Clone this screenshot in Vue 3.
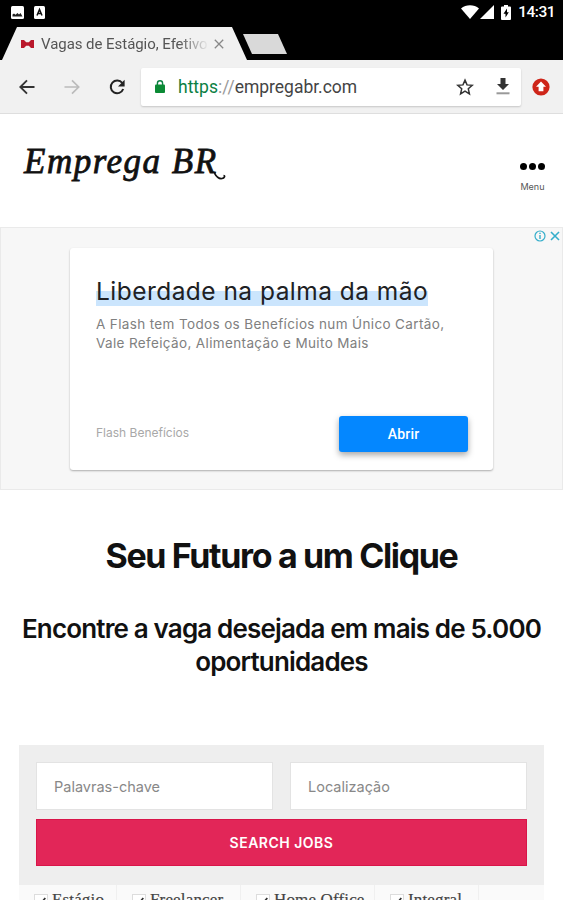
<template>
  <div class="screen">
    <div class="status-bar">
      <div class="status-group">
        <svg width="13" height="13" viewBox="0 0 13 13">
          <rect width="13" height="13" rx="1.5" fill="#fff" />
          <path d="M1.500 10.500v-2l1.500-1 1.500 1.300L6.500 7l1.500 1.500L9.500 7l2 3.500z" fill="#222" />
        </svg>
        <svg width="11" height="13" viewBox="0 0 11 13">
          <rect width="11" height="13" rx="1.5" fill="#fff" />
          <path d="M3 9.500L5.500 3.500 8 9.500M3.900 7.600h3.200" fill="none" stroke="#111" stroke-width="1.500" />
        </svg>
      </div>
      <div class="status-group right">
        <svg width="18" height="14" viewBox="0 0 18 14">
          <path d="M0 3.400C5-.9 13-.9 18 3.400L9 14z" fill="#fff" />
        </svg>
        <svg class="signal" width="14" height="14" viewBox="0 0 14 14">
          <path d="M14 0v14H0z" fill="#fff" />
        </svg>
        <svg class="battery" width="10" height="15" viewBox="0 0 10 15">
          <path d="M3 0h4v1.500h2a1 1 0 0 1 1 1V14a1 1 0 0 1-1 1H1a1 1 0 0 1-1-1V2.500a1 1 0 0 1 1-1h2z" fill="#fff" />
          <path d="M6 3.500L2.500 8.800h2V12.500L7.800 7.200H6z" fill="#000" />
        </svg>
        <span class="clock">14:31</span>
      </div>
    </div>

    <div class="tab-strip">
      <div class="tab">
        <svg width="13" height="8" viewBox="0 0 13 8">
          <path d="M0 0h3l2.200 2.300h2.600L10 0h3v8h-3L7.800 5.700H5.200L3 8H0z" fill="#b9182b" />
        </svg>
        <span class="tab-title">Vagas de Estágio, Efetivo</span>
        <svg class="tab-close" width="10" height="10" viewBox="0 0 10 10">
          <path d="M.8.8l8.400 8.400M9.200.8L.8 9.200" stroke="#888" stroke-width="1.300" />
        </svg>
      </div>
      <div class="new-tab"></div>
    </div>

    <div class="toolbar">
      <svg class="nav-icon" width="16" height="16" viewBox="0 0 16 16">
        <path d="M15.500 8H1.800M8 1.300L1.300 8 8 14.700" fill="none" stroke="#333" stroke-width="1.900" />
      </svg>
      <svg class="nav-icon" width="16" height="16" viewBox="0 0 16 16">
        <path d="M.5 8h13.700M8 1.300L14.700 8 8 14.700" fill="none" stroke="#bbb" stroke-width="1.700" />
      </svg>
      <svg class="nav-icon" width="16" height="16" viewBox="0 0 16 16">
        <path d="M13.300 4A6.400 6.400 0 1 0 14.200 10" fill="none" stroke="#222" stroke-width="2" />
        <path d="M15.600.8v6.700H9z" fill="#222" />
      </svg>
      <div class="omnibox">
        <svg width="10" height="13" viewBox="0 0 10 13">
          <path d="M2.400 6V3.400a2.600 2.600 0 0 1 5.200 0V6" fill="none" stroke="#0b8043" stroke-width="1.400" />
          <rect y="4.500" width="10" height="8.500" rx="1" fill="#0b8a35" />
        </svg>
        <span class="url"><span class="scheme">https</span><span class="slashes">://</span>empregabr.com</span>
        <svg class="star" width="18" height="18" viewBox="0 0 24 24">
          <path d="M12 2.800l2.700 6.400 6.900.6-5.200 4.600 1.500 6.800L12 17.600l-5.900 3.600 1.500-6.800-5.200-4.600 6.900-.6z" fill="none" stroke="#333" stroke-width="2" />
        </svg>
        <svg width="14" height="17" viewBox="0 0 14 17">
          <path d="M4.500 0h5v6H13L7 12 1 6h3.500z" fill="#333" />
          <path d="M.5 15.300h13" stroke="#999" stroke-width="2" />
        </svg>
      </div>
      <svg width="18" height="18" viewBox="0 0 18 18">
        <circle cx="9" cy="9" r="8.600" fill="#ce2519" />
        <path d="M9 3.600l5 5.200h-2.600v4.500H6.600V8.800H4z" fill="#fff" />
      </svg>
    </div>

    <header class="site-header">
      <div class="logo">Emprega BR<svg class="swash" width="12" height="8" viewBox="0 0 12 8">
          <path d="M0 0C2 4.500 5 7 8 6.500 10.500 6 11.500 3.500 9.500 3.500" fill="none" stroke="#111" stroke-width="1.700" />
        </svg></div>
      <div class="menu">
        <div class="dots"><i></i><i></i><i></i></div>
        <span>Menu</span>
      </div>
    </header>

    <section class="ad">
      <div class="ad-choices">
        <svg width="12" height="12" viewBox="0 0 12 12">
          <circle cx="6" cy="6" r="5" fill="none" stroke="#35aecb" stroke-width="1.200" />
          <path d="M6 5v4M6 2.700v1.300" stroke="#35aecb" stroke-width="1.400" />
        </svg>
        <svg width="10" height="10" viewBox="0 0 10 10">
          <path d="M1 1l8 8M9 1L1 9" stroke="#35aecb" stroke-width="1.600" />
        </svg>
      </div>
      <div class="ad-card">
        <h3><span>Liberdade na palma da mão</span></h3>
        <p class="line-one">A Flash tem Todos os Benefícios num Único Cartão,</p>
        <p>Vale Refeição, Alimentação e Muito Mais</p>
        <div class="ad-footer">
          <span class="advertiser">Flash Benefícios</span>
          <button class="ad-button">Abrir</button>
        </div>
      </div>
    </section>

    <section class="hero">
      <h1>Seu Futuro a um Clique</h1>
      <h2>Encontre a vaga desejada em mais de 5.000<br />oportunidades</h2>
    </section>

    <form class="search" @submit.prevent>
      <div class="fields">
        <input v-model="keywords" type="text" placeholder="Palavras-chave" />
        <input v-model="location" type="text" placeholder="Localização" />
        <button type="submit">SEARCH JOBS</button>
      </div>
      <div class="job-types">
        <label v-for="type in jobTypes" :key="type.name" :style="{ width: type.width + 'px' }">
          <span class="checkbox">
            <svg width="9" height="9" viewBox="0 0 9 9">
              <path d="M1 4.500L3.300 7 8.300 1" fill="none" stroke="#333" stroke-width="1.700" />
            </svg>
          </span>
          {{ type.name }}
        </label>
      </div>
    </form>
  </div>
</template>

<script setup>
import { ref } from 'vue'

const keywords = ref('')
const location = ref('')

const jobTypes = [
  { name: 'Estágio', width: 98 },
  { name: 'Freelancer', width: 124 },
  { name: 'Home Office', width: 134 },
  { name: 'Integral', width: 104 }
]
</script>

<style>
body {
  margin: 0;
  overflow: hidden;
}
</style>

<style scoped>
.screen {
  width: 563px;
  height: 900px;
  overflow: hidden;
  background: #fff;
  font-family: Roboto, sans-serif;
}

.screen * {
  box-sizing: border-box;
}

svg {
  display: block;
  flex-shrink: 0;
}

.status-bar {
  height: 27px;
  padding: 0 8px 3px 11px;
  display: flex;
  align-items: center;
  justify-content: space-between;
  background: #000;
}

.status-group {
  display: flex;
  align-items: center;
  gap: 10px;
}

.status-group.right {
  gap: 0;
  padding-left: 2px;
}

.signal {
  margin-left: 1px;
}

.battery {
  margin: 0 7px;
}

.clock {
  color: #fff;
  font-size: 15.5px;
  font-weight: 500;
  letter-spacing: -0.5px;
  line-height: 24px;
}

.tab-strip {
  height: 33px;
  display: flex;
  background: #000;
}

.tab {
  width: 245px;
  height: 33px;
  margin-left: 2px;
  padding-left: 19px;
  display: flex;
  align-items: center;
  background: #f1f1f1;
  clip-path: polygon(15px 0, 230px 0, 245px 100%, 0 100%);
}

.tab-title {
  width: 168px;
  margin-left: 7px;
  overflow: hidden;
  color: #555;
  font-size: 15px;
  letter-spacing: -0.05px;
  line-height: 24px;
  white-space: nowrap;
  -webkit-mask-image: linear-gradient(to right, #000 82%, transparent 100%);
  mask-image: linear-gradient(to right, #000 82%, transparent 100%);
}

.tab-close {
  margin-left: 5px;
}

.new-tab {
  width: 44px;
  height: 20px;
  margin: 7px 0 0 -4px;
  background: #d9d9d9;
  clip-path: polygon(0 0, 35px 0, 100% 100%, 9px 100%);
}

.toolbar {
  height: 54px;
  padding: 0 14px 0 19px;
  display: flex;
  align-items: center;
  background: #f1f1f1;
  border-bottom: 1px solid #dedede;
}

.nav-icon {
  margin-right: 29px;
}

.nav-icon:nth-child(3) {
  margin-right: 16px;
}

.omnibox {
  width: 380px;
  height: 38px;
  margin-right: 11px;
  padding: 0 11px 0 14px;
  display: flex;
  align-items: center;
  flex-shrink: 0;
  background: #fff;
  border-radius: 2px;
  box-shadow: 0 1px 2px rgba(0, 0, 0, 0.18);
}

.url {
  margin-left: 13px;
  color: #444;
  font-size: 17.5px;
  letter-spacing: -0.01px;
}

.scheme {
  color: #0b8043;
}

.slashes {
  color: #999;
}

.star {
  margin-left: auto;
  margin-right: 22px;
}

.site-header {
  height: 113px;
  padding: 28px 18px 0 24px;
  display: flex;
  justify-content: space-between;
}

.logo {
  position: relative;
  height: 40px;
  color: #111;
  font-family: "Liberation Serif", serif;
  font-size: 35px;
  font-style: italic;
  letter-spacing: 1.5px;
  line-height: 40px;
  -webkit-text-stroke: 0.8px #111;
}

.swash {
  position: absolute;
  right: -8px;
  bottom: 2px;
}

.menu {
  padding-top: 21px;
  display: flex;
  flex-direction: column;
  align-items: center;
  color: #555;
  font-family: Inter, sans-serif;
  font-size: 9px;
  line-height: 12px;
}

.dots {
  margin-bottom: 11px;
  display: flex;
  gap: 2px;
}

.dots i {
  width: 7px;
  height: 7px;
  border-radius: 50%;
  background: #000;
}

.ad {
  position: relative;
  height: 263px;
  padding: 20px 70px 0;
  background: #f7f7f7;
  border: 1px solid #eaeaea;
}

.ad-choices {
  position: absolute;
  top: 2px;
  right: 2px;
  display: flex;
  align-items: center;
  gap: 4px;
}

.ad-card {
  width: 423px;
  height: 222px;
  margin-left: -1px;
  padding: 28px 25px 0 26px;
  background: #fff;
  border-radius: 3px;
  box-shadow: 0 1px 2px rgba(0, 0, 0, 0.3);
  font-family: Inter, sans-serif;
}

.ad-card h3 {
  margin: 0;
  color: #202124;
  font-size: 24.5px;
  font-weight: 400;
  letter-spacing: 0.46px;
  line-height: 30px;
  white-space: nowrap;
}

.ad-card h3 span {
  background: linear-gradient(transparent 50%, #cbe5fd 50%);
}

.ad-card p {
  margin: 0;
  color: #808080;
  font-size: 13.5px;
  letter-spacing: 0.36px;
  line-height: 19px;
  white-space: nowrap;
}

.ad-card .line-one {
  margin-top: 9px;
}

.ad-footer {
  margin-top: 63px;
  display: flex;
  align-items: flex-start;
  justify-content: space-between;
}

.advertiser {
  color: #a8a8a8;
  font-size: 12px;
  line-height: 34px;
}

.ad-button {
  width: 129px;
  height: 36px;
  padding: 0;
  color: #fff;
  font-family: Roboto, sans-serif;
  font-size: 14px;
  font-weight: 500;
  letter-spacing: 0.2px;
  background: #0487ff;
  border: none;
  border-radius: 3px;
  box-shadow: 0 3px 6px rgba(0, 0, 0, 0.35);
}

.hero {
  height: 255px;
  padding-top: 44px;
  color: #111;
  font-family: Inter, sans-serif;
  text-align: center;
}

.hero h1 {
  margin: 0;
  font-size: 34px;
  font-weight: 700;
  letter-spacing: -1.35px;
  line-height: 44px;
}

.hero h2 {
  margin: 34px 0 0;
  font-size: 26px;
  font-weight: 600;
  letter-spacing: -0.84px;
  line-height: 33px;
  white-space: nowrap;
}

.search {
  width: 525px;
  margin-left: 19px;
}

.fields {
  height: 140px;
  padding: 17px 17px 19px;
  display: grid;
  grid-template-columns: 237px 237px;
  grid-template-rows: 48px 47px;
  gap: 9px 17px;
  background: #eee;
}

.fields input {
  min-width: 0;
  padding: 0 17px;
  color: #333;
  font-family: Inter, sans-serif;
  font-size: 14.5px;
  background: #fff;
  border: 1px solid #e3e3e3;
  outline: none;
}

.fields input::placeholder {
  color: #888;
}

.fields button {
  grid-column: 1 / 3;
  color: #fff;
  font-family: Inter, sans-serif;
  font-size: 14px;
  font-weight: 600;
  letter-spacing: 0.5px;
  background: #e22658;
  border: 1px solid #d91549;
}

.job-types {
  height: 40px;
  display: flex;
  background: #fafafa;
}

.job-types label {
  height: 40px;
  padding: 4px 0 0 15px;
  display: flex;
  align-items: flex-start;
  gap: 4px;
  color: #444;
  font-family: "Liberation Serif", serif;
  font-size: 17px;
  letter-spacing: 0.15px;
  line-height: 22px;
  white-space: nowrap;
  border-right: 1px solid #f0f0f0;
  -webkit-text-stroke: 0.2px #444;
}

.checkbox {
  width: 14px;
  height: 14px;
  margin-top: 5px;
  padding: 2px;
  background: #fff;
  border: 1px solid #ddd;
}
</style>
